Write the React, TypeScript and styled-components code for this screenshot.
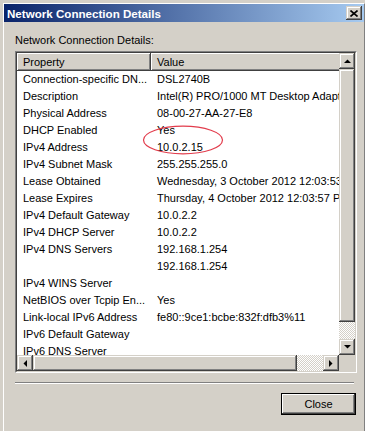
import React from "react";
import styled, { createGlobalStyle } from "styled-components";

const GlobalStyle = createGlobalStyle`
    html, body {
        margin: 0;
        padding: 0;
        background: #d4d0c8;
        overflow: hidden;
    }
    body {
        font-family: "Liberation Sans", Arial, sans-serif;
        font-size: 11px;
        color: #000;
    }
`;

const Screen = styled.div`
    width: 365px;
    height: 431px;
    overflow: hidden;
    padding: 3px 0 0 3px;
    box-sizing: border-box;
`;

const Window = styled.div`
    display: flex;
    flex-direction: column;
    width: 362px;
    height: 440px;
    box-sizing: border-box;
    border-left: 1px solid #fff;
    border-top: 1px solid #fff;
    border-right: 1px solid #808080;
`;

const TitleBar = styled.div`
    display: flex;
    align-items: center;
    justify-content: space-between;
    height: 18px;
    padding: 0 2px 0 3px;
    background: linear-gradient(to right, #0a246a, #a6caf0);
`;

const TitleText = styled.span`
    color: #fff;
    font-weight: bold;
    font-size: 11.6px;
`;

const bevel = `
    background: #d4d0c8;
    box-shadow: inset -1px -1px #404040, inset 1px 1px #d4d0c8,
        inset -2px -2px #808080, inset 2px 2px #fff;
`;

const CaptionButton = styled.div`
    ${bevel}
    width: 16px;
    height: 14px;
    display: flex;
    align-items: center;
    justify-content: center;
`;

const Body = styled.div`
    display: flex;
    flex-direction: column;
    padding: 12px 7px 0 11px;
`;

const Label = styled.div`
    line-height: 13px;
    margin-bottom: 4px;
`;

const ListFrame = styled.div`
    height: 322px;
    box-sizing: border-box;
    border: 1px solid;
    border-color: #808080 #fff #fff #808080;
`;

const ListInner = styled.div`
    height: 100%;
    box-sizing: border-box;
    border: 1px solid;
    border-color: #404040 #d4d0c8 #d4d0c8 #404040;
    display: grid;
    grid-template-columns: 1fr 16px;
    grid-template-rows: 1fr 16px;
    background: #fff;
`;

const ListArea = styled.div`
    position: relative;
    overflow: hidden;
`;

const HeaderRow = styled.div`
    display: flex;
    height: 18px;
`;

const HeaderCell = styled.div<{ $w: number }>`
    flex: 0 0 ${(p) => p.$w}px;
    box-sizing: border-box;
    padding-left: 6px;
    line-height: 18px;
    background: #d4d0c8;
    box-shadow: inset -1px -1px #404040, inset 1px 1px #fff,
        inset -2px -2px #808080;
`;

const Row = styled.div`
    display: flex;
    height: 17px;
    line-height: 17px;
`;

const Cell = styled.div<{ $w: number }>`
    flex: 0 0 ${(p) => p.$w}px;
    box-sizing: border-box;
    padding-left: 6px;
    white-space: nowrap;
    overflow: hidden;
`;

const Highlight = styled.svg`
    position: absolute;
    left: 125px;
    top: 72px;
`;

const VScroll = styled.div`
    display: flex;
    flex-direction: column;
`;

const HScroll = styled.div`
    display: flex;
`;

const ScrollButton = styled.div`
    ${bevel}
    flex: 0 0 16px;
    width: 16px;
    height: 16px;
    display: flex;
    align-items: center;
    justify-content: center;
`;

const Thumb = styled.div<{ $size: number }>`
    ${bevel}
    flex: 0 0 ${(p) => p.$size}px;
`;

const Track = styled.div`
    flex: 1;
    background-color: #fff;
    background-image: conic-gradient(
        #d4d0c8 25%,
        #fff 0 50%,
        #d4d0c8 0 75%,
        #fff 0
    );
    background-size: 2px 2px;
`;

const Corner = styled.div`
    background: #d4d0c8;
`;

const Separator = styled.div`
    margin-top: 9px;
    height: 0;
    border-top: 1px solid #808080;
    border-bottom: 1px solid #fff;
    margin-right: 3px;
`;

const Footer = styled.div`
    display: flex;
    justify-content: flex-end;
    margin-top: 9px;
    margin-right: 1px;
`;

const PushButton = styled.div`
    width: 75px;
    height: 22px;
    box-sizing: border-box;
    border: 1px solid #000;
    background: #d4d0c8;
    box-shadow: inset -1px -1px #404040, inset 1px 1px #fff,
        inset -2px -2px #808080;
    display: flex;
    align-items: center;
    justify-content: center;
`;

type Dir = "up" | "down" | "left" | "right";

const arrowPoints: Record<Dir, string> = {
    up: "0,4 7,4 3.5,0.5",
    down: "0,0 7,0 3.5,3.5",
    left: "4,0 4,7 0.5,3.5",
    right: "0,0 0,7 3.5,3.5",
};

const Arrow = ({ dir }: { dir: Dir }) => {
    const vertical = dir === "up" || dir === "down";
    return (
        <svg width={vertical ? 7 : 4} height={vertical ? 4 : 7}>
            <polygon points={arrowPoints[dir]} fill="#000" />
        </svg>
    );
};

const rows: [string, string][] = [
    ["Connection-specific DN...", "DSL2740B"],
    ["Description", "Intel(R) PRO/1000 MT Desktop Adapter"],
    ["Physical Address", "08-00-27-AA-27-E8"],
    ["DHCP Enabled", "Yes"],
    ["IPv4 Address", "10.0.2.15"],
    ["IPv4 Subnet Mask", "255.255.255.0"],
    ["Lease Obtained", "Wednesday, 3 October 2012 12:03:53 PM"],
    ["Lease Expires", "Thursday, 4 October 2012 12:03:57 PM"],
    ["IPv4 Default Gateway", "10.0.2.2"],
    ["IPv4 DHCP Server", "10.0.2.2"],
    ["IPv4 DNS Servers", "192.168.1.254"],
    ["", "192.168.1.254"],
    ["IPv4 WINS Server", ""],
    ["NetBIOS over Tcpip En...", "Yes"],
    ["Link-local IPv6 Address", "fe80::9ce1:bcbe:832f:dfb3%11"],
    ["IPv6 Default Gateway", ""],
    ["IPv6 DNS Server", ""],
];

export default function App() {
    return (
        <>
            <GlobalStyle />
            <Screen>
                <Window>
                    <TitleBar>
                        <TitleText>Network Connection Details</TitleText>
                        <CaptionButton>
                            <svg width="8" height="7" viewBox="0 0 8 7">
                                <path
                                    d="M0.5 0.5 L7.5 6.5 M7.5 0.5 L0.5 6.5"
                                    stroke="#000"
                                    strokeWidth="1.6"
                                />
                            </svg>
                        </CaptionButton>
                    </TitleBar>
                    <Body>
                        <Label>Network Connection Details:</Label>
                        <ListFrame>
                            <ListInner>
                                <ListArea>
                                    <HeaderRow>
                                        <HeaderCell $w={134}>Property</HeaderCell>
                                        <HeaderCell $w={260}>Value</HeaderCell>
                                    </HeaderRow>
                                    {rows.map(([prop, value], i) => (
                                        <Row key={i}>
                                            <Cell $w={134}>{prop}</Cell>
                                            <Cell $w={260}>{value}</Cell>
                                        </Row>
                                    ))}
                                    <Highlight width="82" height="30">
                                        <ellipse
                                            cx="41"
                                            cy="15"
                                            rx="39.5"
                                            ry="13.8"
                                            fill="none"
                                            stroke="#e23c4c"
                                            strokeWidth="1.2"
                                        />
                                    </Highlight>
                                </ListArea>
                                <VScroll>
                                    <ScrollButton>
                                        <Arrow dir="up" />
                                    </ScrollButton>
                                    <Thumb $size={253} />
                                    <Track />
                                    <ScrollButton>
                                        <Arrow dir="down" />
                                    </ScrollButton>
                                </VScroll>
                                <HScroll>
                                    <ScrollButton>
                                        <Arrow dir="left" />
                                    </ScrollButton>
                                    <Thumb $size={264} />
                                    <Track />
                                    <ScrollButton>
                                        <Arrow dir="right" />
                                    </ScrollButton>
                                </HScroll>
                                <Corner />
                            </ListInner>
                        </ListFrame>
                        <Separator />
                        <Footer>
                            <PushButton>Close</PushButton>
                        </Footer>
                    </Body>
                </Window>
            </Screen>
        </>
    );
}
